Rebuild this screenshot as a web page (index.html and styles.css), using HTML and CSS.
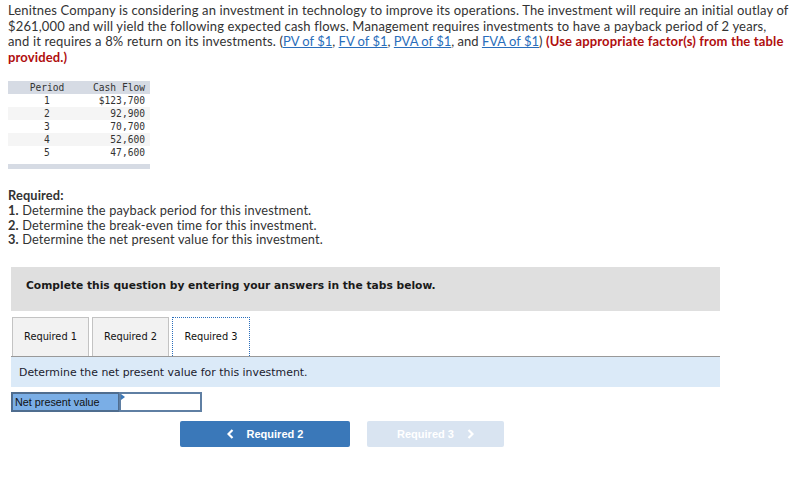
FILE: index.html
```html
<!DOCTYPE html>
<html>
<head>
<meta charset="utf-8">
<link rel="stylesheet" href="styles.css">
</head>
<body>
<div class="page">
  <p class="intro">Lenitnes Company is considering an investment in technology to improve its operations. The investment will require an initial outlay of $261,000 and will yield the following expected cash flows. Management requires investments to have a payback period of 2 years, and it requires a 8% return on its investments. <span class="refs">(<a href="#">PV of $1</a>, <a href="#">FV of $1</a>, <a href="#">PVA of $1</a>, and <a href="#">FVA of $1</a>)</span> <strong class="warn">(Use appropriate factor(s) from the table provided.)</strong></p>

  <table class="flows">
    <thead>
      <tr><th class="c-period">Period</th><th class="c-cash">Cash Flow</th></tr>
    </thead>
    <tbody>
      <tr><td class="c-period">1</td><td class="c-cash">$123,700</td></tr>
      <tr class="alt"><td class="c-period">2</td><td class="c-cash">92,900</td></tr>
      <tr><td class="c-period">3</td><td class="c-cash">70,700</td></tr>
      <tr class="alt"><td class="c-period">4</td><td class="c-cash">52,600</td></tr>
      <tr><td class="c-period">5</td><td class="c-cash">47,600</td></tr>
    </tbody>
  </table>
  <div class="flows-foot"></div>

  <div class="required">
    <div class="req-title">Required:</div>
    <div><b>1.</b> Determine the payback period for this investment.</div>
    <div><b>2.</b> Determine the break-even time for this investment.</div>
    <div><b>3.</b> Determine the net present value for this investment.</div>
  </div>

  <div class="instructions">Complete this question by entering your answers in the tabs below.</div>

  <div class="tabs">
    <div class="tab">Required 1</div>
    <div class="tab">Required 2</div>
    <div class="tab active">Required 3</div>
  </div>
  <div class="tab-body">Determine the net present value for this investment.</div>

  <div class="answer">
    <div class="answer-label">Net present value</div>
    <div class="answer-input"><span class="marker"></span></div>
  </div>

  <div class="nav">
    <button class="btn prev"><svg class="chev" width="7" height="10" viewBox="0 0 7 10"><polyline points="5.5,1 1.5,5 5.5,9" fill="none" stroke="#fff" stroke-width="2.2"/></svg>Required 2</button>
    <button class="btn next">Required 3<svg class="chev" width="7" height="10" viewBox="0 0 7 10"><polyline points="1.5,1 5.5,5 1.5,9" fill="none" stroke="#fff" stroke-width="2.2"/></svg></button>
  </div>
</div>
</body>
</html>
```

FILE: styles.css
```css
* { box-sizing: border-box; }
html, body { margin: 0; padding: 0; background: #fff; }
.page {
  padding: 3px 8px 0 8px;
  font-family: "Lato", "Liberation Sans", sans-serif;
  color: #333;
}
.intro {
  margin: 0;
  max-width: 781px;
  font-size: 13px;
  letter-spacing: 0.15px;
  line-height: 15.6px;
  color: #333;
}
.intro .refs { letter-spacing: 0; }
.intro a { color: #2a6ebb; text-decoration: underline; }
.warn { color: #b00e0e; font-weight: 700; }

.flows {
  margin-top: 16px;
  width: 142px;
  border-collapse: collapse;
  font-family: "DejaVu Sans Mono", "Liberation Mono", monospace;
  font-size: 9.6px;
  color: #333;
}
.flows th {
  background: #d6dbe4;
  font-weight: normal;
  height: 13px;
  padding: 0;
  line-height: 13px;
}
.flows td { height: 13px; padding: 0; line-height: 13px; }
.flows .alt td { background: #f5f5f5; }
.c-period { text-align: center; width: 78px; }
.c-cash { text-align: right; padding-right: 5px !important; }
.flows-foot {
  width: 142px;
  height: 5px;
  margin-top: 5px;
  background: #d6dbe4;
}

.required {
  margin-top: 19px;
  font-size: 12.8px;
  letter-spacing: 0.15px;
  line-height: 14.6px;
  color: #333;
}
.req-title { font-weight: 700; }
.required b { font-weight: 700; }

.instructions {
  margin: 20px 0 0 3px;
  width: 709px;
  height: 44px;
  background: #dfdfdf;
  padding: 12px 15px 0 15px;
  font-family: "DejaVu Sans", Verdana, sans-serif;
  font-weight: 700;
  font-size: 10.7px;
  color: #1a1a1a;
}

.tabs {
  display: flex;
  gap: 3px;
  margin: 6px 0 0 4px;
}
.tab {
  width: 77px;
  height: 39px;
  background: #f2f2f2;
  border: 1px solid #c3c3c3;
  border-bottom: none;
  font-family: "DejaVu Sans", Verdana, sans-serif;
  font-size: 9.8px;
  color: #111;
  display: flex;
  align-items: center;
  justify-content: center;
}
.tab.active {
  width: 78px;
  background: #fff;
  border: 1px dotted #2a6ebb;
  border-bottom: none;
}
.tab-body {
  margin-left: 3px;
  width: 709px;
  height: 31px;
  border-top: 1px solid #999;
  background: #dbeaf8;
  padding: 9px 0 0 8px;
  font-family: "DejaVu Sans", Verdana, sans-serif;
  font-size: 10.9px;
  color: #1a1a2e;
}

.answer {
  display: flex;
  margin: 5px 0 0 3px;
  height: 20px;
}
.answer-label {
  width: 108px;
  background: #7aaee6;
  border: 2px solid #4f6d8f;
  border-right: 1px solid #4f6d8f;
  font-family: "Liberation Sans", Arial, sans-serif;
  font-size: 10.8px;
  color: #111;
  padding: 1px 0 0 2px;
  line-height: 14px;
}
.answer-input {
  width: 83px;
  background: #fff;
  border: 2px solid #5f7fa3;
  position: relative;
}
.marker {
  position: absolute;
  left: 0;
  top: 0;
  width: 0;
  height: 0;
  border-top: 3px solid transparent;
  border-bottom: 3px solid transparent;
  border-left: 4px solid #3a78b9;
}

.nav {
  display: flex;
  gap: 17px;
  margin: 9px 0 0 172px;
}
.btn {
  height: 26px;
  border: none;
  border-radius: 2px;
  font-family: "Liberation Sans", Arial, sans-serif;
  font-weight: 700;
  font-size: 11px;
  color: #fff;
  display: flex;
  align-items: center;
  justify-content: center;
  padding: 0;
}
.btn.prev { width: 170px; background: #3a78b9; }
.btn.next { width: 137px; background: #d9e4f1; }
.prev .chev { margin-right: 13px; }
.next .chev { margin-left: 13px; }
```
